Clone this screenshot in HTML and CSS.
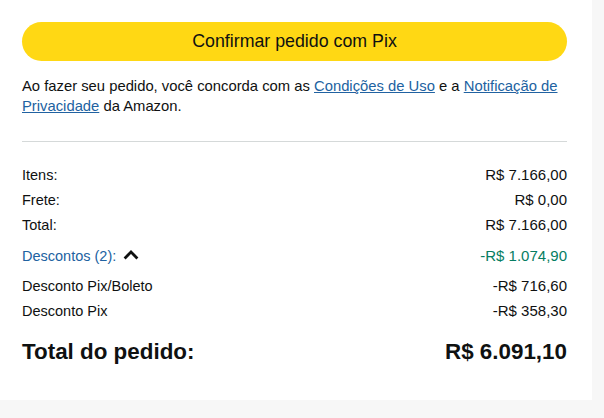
FILE: index.html
```html
<!DOCTYPE html>
<html lang="pt-BR">
<head>
<meta charset="utf-8">
<link rel="stylesheet" href="styles.css">
</head>
<body>
<div class="card">
  <button class="confirm">Confirmar pedido com Pix</button>
  <p class="terms">Ao fazer seu pedido, você concorda com as <a href="#">Condições de Uso</a> e a <a href="#">Notificação de Privacidade</a> da Amazon.</p>
  <hr class="divider">
  <div class="rows">
    <div class="row"><span class="lbl">Itens:</span><span class="val">R$ 7.166,00</span></div>
    <div class="row"><span class="lbl">Frete:</span><span class="val">R$ 0,00</span></div>
    <div class="row"><span class="lbl">Total:</span><span class="val">R$ 7.166,00</span></div>
    <div class="row discounts"><span class="lbl disc-label">Descontos (2): <svg class="chev" width="16" height="10" viewBox="0 0 16 10"><polyline points="1.6,8.4 8,2 14.4,8.4" fill="none" stroke="#0f1111" stroke-width="2.8"/></svg></span><span class="val green">-R$ 1.074,90</span></div>
    <div class="row sub1"><span class="lbl">Desconto Pix/Boleto</span><span class="val">-R$ 716,60</span></div>
    <div class="row"><span class="lbl">Desconto Pix</span><span class="val">-R$ 358,30</span></div>
    <div class="row grand"><span>Total do pedido:</span><span>R$ 6.091,10</span></div>
  </div>
</div>
</body>
</html>
```

FILE: styles.css
```css
html, body {
  margin: 0;
  padding: 0;
  background: #f7f7f7;
}
body {
  font-family: "Liberation Sans", Arial, sans-serif;
  color: #0f1111;
  font-size: 14.8px;
}
.card {
  width: 592px;
  height: 400px;
  box-sizing: border-box;
  background: #fff;
  padding: 22px 25px 0 22px;
}
.confirm {
  display: block;
  width: 100%;
  height: 39px;
  border: none;
  border-radius: 20px;
  background: #ffd814;
  color: #0f1111;
  font-family: inherit;
  font-size: 17.8px;
  padding: 0;
}
.terms {
  margin: 15px 0 0;
  line-height: 20px;
}
.terms a {
  color: #2162a1;
  text-decoration: underline;
}
.divider {
  border: none;
  border-top: 1px solid #d5d9d9;
  margin: 25px 0 0;
  height: 0;
}
.rows {
  margin-top: 23px;
  display: flex;
  flex-direction: column;
  gap: 5px;
}
.row {
  display: flex;
  justify-content: space-between;
  align-items: center;
  line-height: 20px;
}
.lbl {
  font-size: 14.5px;
}
.val {
  font-size: 15px;
}
.discounts {
  margin-top: 6px;
}
.disc-label {
  color: #2162a1;
  display: flex;
  align-items: center;
  gap: 7px;
}
.chev {
  display: block;
  margin-top: -2px;
}
.green {
  color: #067d62;
}
.sub1 {
  margin-top: 5px;
}
.grand {
  margin-top: 12px;
  font-size: 22.4px;
  font-weight: bold;
  line-height: 28px;
}
```
